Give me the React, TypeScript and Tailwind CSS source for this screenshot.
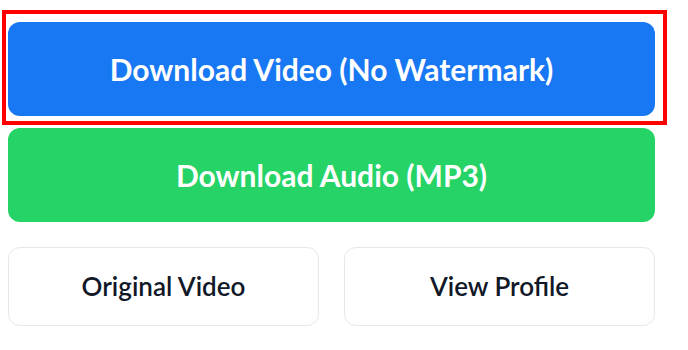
export default function App() {
  return (
    <div className="w-[688px] h-[350px] bg-white px-2 pt-[22px]" style={{ fontFamily: '"Segoe UI", Lato, "Open Sans", sans-serif' }}>
      <div className="w-[647px] flex flex-col">
        {/* Highlighted primary action */}
        <div className="relative">
          <button className="w-full h-[94px] rounded-[12px] bg-[#1877f2] text-white text-[30px] font-bold">
            Download Video (No Watermark)
          </button>
          <div className="absolute -left-[6px] -top-[12px] w-[665px] h-[115px] border-4 border-[#ff0000] pointer-events-none" />
        </div>

        <button className="mt-[12px] w-full h-[94px] rounded-[12px] bg-[#25d366] text-white text-[30px] font-bold">
          Download Audio (MP3)
        </button>

        <div className="mt-[25px] grid grid-cols-2 gap-[25px]">
          <button className="h-[79px] rounded-[12px] border border-[#e5e7eb] bg-white text-[#111827] text-[26px] font-semibold">
            Original Video
          </button>
          <button className="h-[79px] rounded-[12px] border border-[#e5e7eb] bg-white text-[#111827] text-[26px] font-semibold">
            View Profile
          </button>
        </div>
      </div>
    </div>
  );
}
